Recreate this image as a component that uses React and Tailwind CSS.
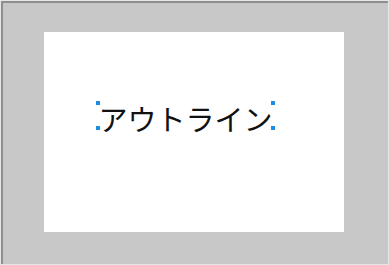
import React from 'react';

const Handle = ({ className }) => (
  <span className={`absolute w-[4px] h-[4px] bg-[#1c8de0] ${className}`}></span>
);

const App = () => {
  return (
    <div className="w-[389px] h-[265px] border border-[#e6e6e6] bg-[#c8c8c8]">
      <div className="w-full h-full border-t-2 border-l-2 border-[#8e8e8e] pt-[29px] pl-[41px]">
        <div className="w-[300px] h-[200px] bg-white pt-[69px] pl-[52px]">
          <div className="relative w-[179px] h-[29px] flex items-center justify-center">
            <span
              className="mt-[5px] text-[29px] leading-[29px] font-normal text-[#111] whitespace-nowrap"
              style={{ fontFamily: '"Noto Sans CJK JP", sans-serif' }}
            >
              アウトライン
            </span>
            <Handle className="top-0 left-0" />
            <Handle className="bottom-0 left-0" />
            <Handle className="top-0 right-0" />
            <Handle className="bottom-0 right-0" />
          </div>
        </div>
      </div>
    </div>
  );
};

export default App;
